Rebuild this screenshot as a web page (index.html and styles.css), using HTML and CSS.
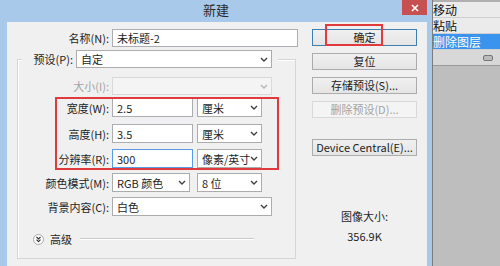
FILE: index.html
```html
<!DOCTYPE html>
<html lang="zh-CN">
<head>
  <meta charset="UTF-8" />
  <title>新建</title>
  <link rel="stylesheet" href="styles.css">
</head>
<body>
  <div class="window">
    <div class="titlebar">
      <span class="title">新建</span>
      <span class="close">
        <svg width="8" height="8" viewBox="0 0 8 8"><path d="M1 1L7 7M7 1L1 7" stroke="#fff" stroke-width="1.6"/></svg>
      </span>
    </div>

    <div class="client">
      <div class="form">
        <div class="row">
          <span class="lbl lbl-top">名称(N):</span>
          <div class="field w-name">未标题-2</div>
        </div>

        <fieldset class="group">
          <legend class="preset">
            <span class="lbl lbl-preset">预设(P):</span>
            <div class="field select w-wide">自定
              <svg class="arrow" width="8" height="5" viewBox="0 0 8 5"><polyline points="1,1 4,4 7,1" /></svg>
            </div>
          </legend>

          <div class="row r-size">
            <span class="lbl off">大小(I):</span>
            <div class="field select w-wide disabled">
              <svg class="arrow" width="8" height="5" viewBox="0 0 8 5"><polyline points="1,1 4,4 7,1" /></svg>
            </div>
          </div>

          <div class="marked">
            <div class="row r-w">
              <span class="lbl">宽度(W):</span>
              <div class="field tall w-num">2.5</div>
              <div class="field select tall w-unit">厘米
                <svg class="arrow" width="8" height="5" viewBox="0 0 8 5"><polyline points="1,1 4,4 7,1" /></svg>
              </div>
            </div>
            <div class="row r-h">
              <span class="lbl">高度(H):</span>
              <div class="field tall w-num">3.5</div>
              <div class="field select tall w-unit">厘米
                <svg class="arrow" width="8" height="5" viewBox="0 0 8 5"><polyline points="1,1 4,4 7,1" /></svg>
              </div>
            </div>
            <div class="row r-r">
              <span class="lbl">分辨率(R):</span>
              <div class="field tall w-num focus">300</div>
              <div class="field select tall w-unit">像素/英寸
                <svg class="arrow" width="8" height="5" viewBox="0 0 8 5"><polyline points="1,1 4,4 7,1" /></svg>
              </div>
            </div>
            <div class="redbox box-rows"></div>
          </div>

          <div class="row r-mode">
            <span class="lbl">颜色模式(M):</span>
            <div class="field select tall w-mode">RGB 颜色
              <svg class="arrow" width="8" height="5" viewBox="0 0 8 5"><polyline points="1,1 4,4 7,1" /></svg>
            </div>
            <div class="field select tall w-unit gap7">8 位
              <svg class="arrow" width="8" height="5" viewBox="0 0 8 5"><polyline points="1,1 4,4 7,1" /></svg>
            </div>
          </div>

          <div class="row r-bg">
            <span class="lbl">背景内容(C):</span>
            <div class="field select tall w-wide">白色
              <svg class="arrow" width="8" height="5" viewBox="0 0 8 5"><polyline points="1,1 4,4 7,1" /></svg>
            </div>
          </div>

          <div class="advanced">
            <svg class="adv-ico" width="11" height="11" viewBox="0 0 11 11">
              <circle cx="5.5" cy="5.5" r="5" fill="#fdfdfd" stroke="#a9a9a9" />
              <polyline points="3.5,3 5.5,5 7.5,3" fill="none" stroke="#333" stroke-width="1.1" />
              <polyline points="3.5,5.6 5.5,7.6 7.5,5.6" fill="none" stroke="#333" stroke-width="1.1" />
            </svg>
            <span>高级</span>
            <span class="rule"></span>
          </div>
        </fieldset>
      </div>

      <div class="buttons">
        <div class="btn default">确定</div>
        <div class="btn">复位</div>
        <div class="btn">存储预设(S)...</div>
        <div class="btn disabled">删除预设(D)...</div>
        <div class="btn device">Device Central(E)...</div>
        <div class="size-info">
          <div>图像大小:</div>
          <div>356.9K</div>
        </div>
        <div class="redbox box-ok"></div>
      </div>
    </div>
  </div>

  <div class="side">
    <div class="menu">
      <div class="mi">移动</div>
      <div class="mi">粘贴</div>
      <div class="mi on">删除图层</div>
      <div class="mi tool"><span class="tool-ico"></span></div>
    </div>
  </div>
</body>
</html>
```

FILE: styles.css
```css
* {
  box-sizing: border-box;
}
body {
  margin: 0;
  width: 500px;
  height: 266px;
  overflow: hidden;
  display: flex;
  font-family: "Noto Sans CJK SC", sans-serif;
  font-size: 11px;
  color: #1e1e1e;
  background: #bebebe;
}

/* window frame */
.window {
  width: 432px;
  background: #a9c9ea;
  display: flex;
  flex-direction: column;
}
.titlebar {
  height: 22px;
  display: grid;
  grid-template-columns: 1fr auto 1fr;
  align-items: start;
}
.title {
  grid-column: 2;
  font-size: 13px;
  line-height: 20px;
  color: #2a2a2a;
}
.close {
  grid-column: 3;
  justify-self: end;
  width: 25px;
  height: 15px;
  margin-right: 5px;
  background: #c75050;
  display: flex;
  align-items: center;
  justify-content: center;
}
.client {
  flex: 1;
  margin: 0 5px 0 7px;
  background: #f0f0f0;
  display: flex;
  padding-top: 7px;
}

/* form */
.form {
  width: 291px;
}
.row {
  display: flex;
  align-items: center;
}
.lbl {
  width: 94px;
  padding-right: 3px;
  text-align: right;
  white-space: nowrap;
  line-height: 16px;
}
.lbl-top {
  width: 105px;
}
.lbl.off {
  color: #a3a3a3;
}
.field {
  height: 18px;
  border: 1px solid #abadb3;
  background: #fff;
  padding: 0 4px;
  display: flex;
  align-items: center;
  white-space: nowrap;
  line-height: 16px;
}
.field.tall {
  height: 19px;
}
.field.focus {
  border-color: #569de5;
}
.select {
  justify-content: space-between;
  padding-right: 3px;
  border-color: #acacac;
}
.select.disabled {
  background: #f4f4f4;
  border-color: #d9d9d9;
}
.arrow {
  margin-left: auto;
  flex: none;
}
.arrow polyline {
  fill: none;
  stroke: #404040;
  stroke-width: 1.4;
}
.disabled .arrow polyline {
  stroke: #b5b5b5;
}
.w-name { width: 186px; }
.w-wide { width: 160px; }
.w-num { width: 81px; margin-right: 4px; }
.w-unit { width: 65px; }
.w-mode { width: 78px; }
.gap7 { margin-left: 7px; }

.group {
  margin: 3px 0 0 10px;
  padding: 0;
  width: 279px;
  height: 209px;
  border: 1px solid #d5d5d5;
  box-shadow: inset 1px 1px 0 #fff;
}
.preset {
  margin-left: 4px;
  padding: 0 6px 0 0;
  display: flex;
  align-items: center;
  background: #f0f0f0;
}
.lbl-preset {
  width: 54px;
}
.preset .w-wide {
  width: 196px;
}
.r-size { margin-top: 9px; }
.marked {
  position: relative;
  margin-top: 3px;
}
.r-h { margin-top: 7px; }
.r-r { margin-top: 6px; }
.r-mode { margin-top: 5px; }
.r-bg { margin-top: 5px; }

.advanced {
  margin-top: 16px;
  width: 236px;
  padding-left: 15px;
  height: 14px;
  display: flex;
  align-items: center;
  gap: 6px;
}
.advanced span {
  line-height: 14px;
}
.rule {
  flex: 1;
  height: 2px;
  border-top: 1px solid #c9c9c9;
  border-bottom: 1px solid #fff;
  margin-left: 2px;
}

/* annotation boxes */
.redbox {
  position: absolute;
  border: 2px solid #e03a3f;
}
.box-rows {
  left: 37px;
  top: -1px;
  width: 224px;
  height: 73px;
}
.box-ok {
  left: 13px;
  top: -5px;
  width: 58px;
  height: 22px;
}

/* buttons */
.buttons {
  position: relative;
  width: 105px;
  margin-left: 14px;
  display: flex;
  flex-direction: column;
  gap: 7px;
}
.btn {
  height: 17px;
  border: 1px solid #acacac;
  background: linear-gradient(#f0f0f0, #e5e5e5);
  display: flex;
  align-items: center;
  justify-content: center;
  line-height: 15px;
  white-space: nowrap;
}
.btn.default {
  border-color: #3c7fb1;
}
.btn.disabled {
  background: #f4f4f4;
  border-color: #d9d9d9;
  color: #a3a3a3;
}
.btn.device {
  margin-top: 14px;
}
.size-info {
  margin-top: 45px;
  text-align: center;
  line-height: 16px;
  display: flex;
  flex-direction: column;
  gap: 4px;
}

/* background app panel */
.side {
  flex: 1;
  border-left: 1px solid #7d7d7d;
  background: #bebebe;
}
.menu {
  border-top: 2px solid #b0b0b0;
  background: #ebebeb;
}
.mi {
  height: 16px;
  line-height: 16px;
  font-size: 12px;
  white-space: nowrap;
  overflow: hidden;
  border-bottom: 1px solid #cfcfcf;
  color: #111;
}
.mi.on {
  background: #3a94ee;
  color: #fff;
}
.mi.tool {
  background: #d8d8d8;
  display: flex;
  justify-content: flex-end;
  align-items: center;
  padding-right: 7px;
  border-bottom: 1px solid #9a9a9a;
}
.tool-ico {
  width: 10px;
  height: 6px;
  border: 1px solid #777;
  border-radius: 2px;
  background: #bbb;
}
```
